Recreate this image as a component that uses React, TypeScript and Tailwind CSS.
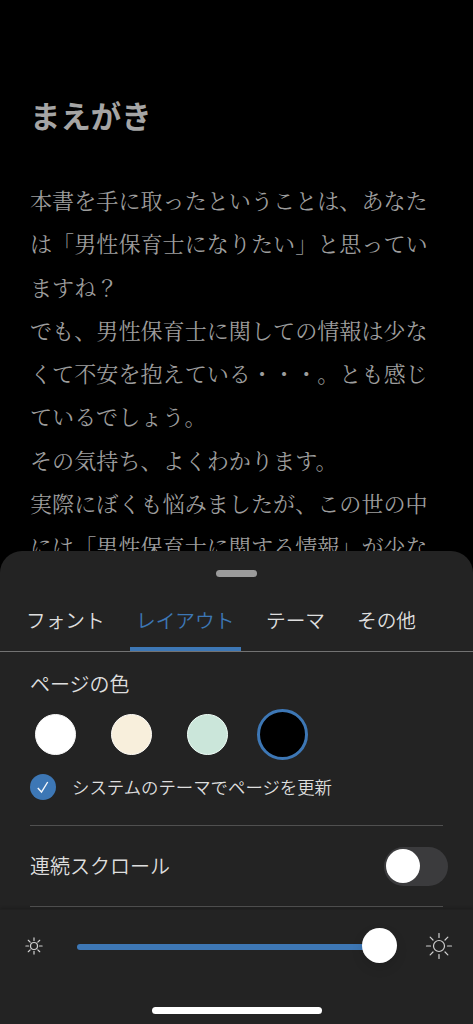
const lines = [
  '本書を手に取ったということは、あなた',
  'は「男性保育士になりたい」と思ってい',
  'ますね？',
  'でも、男性保育士に関しての情報は少な',
  'くて不安を抱えている・・・。とも感じ',
  'ているでしょう。',
  'その気持ち、よくわかります。',
  '実際にぼくも悩みましたが、この世の中',
  'には「男性保育士に関する情報」が少な',
];

const tabs = [
  { label: 'フォント', box: 'ml-[26px] w-[104px]' },
  { label: 'レイアウト', box: 'w-[111px] pl-[6px] text-[#3d77b5]', active: true },
  { label: 'テーマ', box: 'ml-[25px] w-[91px]' },
  { label: 'その他', box: 'w-[90px]' },
];

function Sun({ size, ring, from, to, stroke }: { size: number; ring: number; from: number; to: number; stroke: number }) {
  return (
    <svg width={size} height={size} viewBox={`${-size / 2} ${-size / 2} ${size} ${size}`} fill="none" stroke="#d0d0d0" strokeWidth={stroke}>
      <circle r={ring} />
      {[0, 45, 90, 135, 180, 225, 270, 315].map((a) => (
        <path key={a} d={`M${from} 0H${to}`} transform={`rotate(${a})`} strokeLinecap="round" />
      ))}
    </svg>
  );
}

export default function App() {
  return (
    <div className="flex h-[1024px] w-[473px] flex-col overflow-hidden bg-black font-['Noto_Sans_CJK_JP',sans-serif] text-[#dedede]">
      <main className="h-[551px] shrink-0 overflow-hidden pl-[30px] text-[#a5a5a5]">
        <h1 className="mt-[94px] h-[84px] text-[30.4px] leading-[42px] font-bold">まえがき</h1>
        <div className="font-['Noto_Serif_CJK_JP','Noto_Serif_JP','Noto_Sans_CJK_JP',serif] text-[22.1px] leading-[43.25px] font-normal text-[#9d9d9d]">
          {lines.map((line) => (
            <p key={line} className="whitespace-nowrap">{line}</p>
          ))}
        </div>
      </main>

      <section className="flex h-[473px] shrink-0 flex-col rounded-t-[22px] bg-[#232323]">
        <div className="mx-auto mt-[19px] h-[7px] w-[41px] shrink-0 rounded-full bg-[#9b9b9b]" />
        <nav className="flex h-[75px] shrink-0 border-b border-[#727272] pt-[24px]">
          {tabs.map((tab) => (
            <div key={tab.label} className={`flex shrink-0 flex-col justify-between whitespace-nowrap ${tab.box}`}>
              <span className="text-[19.7px] leading-[38px] font-[350]">{tab.label}</span>
              {tab.active && <span className="-ml-[6px] h-[4px] w-[111px] bg-[#3d77b5]" />}
            </div>
          ))}
        </nav>

        <div className="flex h-[257px] shrink-0 flex-col px-[30px]">
          <h2 className="mt-[17px] h-[40px] text-[20px] leading-[30px] font-[350]">ページの色</h2>
          <div className="flex h-[50px] items-center pl-[5px]">
            <span className="size-[41px] rounded-full border border-[#f8f8f8] bg-white" />
            <span className="ml-[35px] size-[41px] rounded-full border border-[#fffdf8] bg-[#f8efdc]" />
            <span className="ml-[35px] size-[41px] rounded-full border border-[#f0fff8] bg-[#cbe6da]" />
            <span className="ml-[29px] size-[51px] rounded-full border-[3px] border-[#3d77b5] bg-black" />
          </div>
          <div className="mt-[15px] flex h-[26px] items-center gap-[16px]">
            <span className="flex size-[26px] items-center justify-center rounded-full bg-[#3d77b5]">
              <svg width="14" height="14" viewBox="0 0 14 14" fill="none" stroke="#f5f8fc" strokeWidth="1.4">
                <path d="M1.8 8L5.5 12L11.7 2" />
              </svg>
            </span>
            <span className="text-[17.4px] leading-[26px] font-[350] whitespace-nowrap">システムのテーマでページを更新</span>
          </div>
          <div className="mt-[25px] flex h-[82px] shrink-0 items-center justify-between border-y border-[#505050]">
            <span className="text-[20px] font-[350]">連続スクロール</span>
            <span className="-mr-[5px] flex h-[39px] w-[64px] items-center rounded-full bg-[#3b3b3d] pl-[2px]">
              <span className="size-[34px] rounded-full bg-white" />
            </span>
          </div>
        </div>

        <footer className="flex grow flex-col border-t border-[#202020] bg-[#232323] shadow-[0_-1px_3px_rgba(0,0,0,0.2)]">
          <div className="mt-[18px] flex h-[36px] items-center pl-[25px]">
            <Sun size={18} ring={3.5} from={5.4} to={8.1} stroke={1.2} />
            <div className="ml-[34px] flex w-[320px] items-center">
              <span className="mt-[2px] h-[6px] w-[290px] rounded-l-full bg-[#3d77b5]" />
              <span className="-ml-[4px] mb-[1px] size-[35px] shrink-0 rounded-full bg-white shadow-[0_5px_12px_rgba(0,0,0,0.12)]" />
            </div>
            <span className="ml-[28px]"><Sun size={28} ring={5.5} from={8.5} to={12.5} stroke={1.2} /></span>
          </div>
          <div className="mx-auto mt-[43px] h-[7px] w-[170px] rounded-full bg-white" />
        </footer>
      </section>
    </div>
  );
}
